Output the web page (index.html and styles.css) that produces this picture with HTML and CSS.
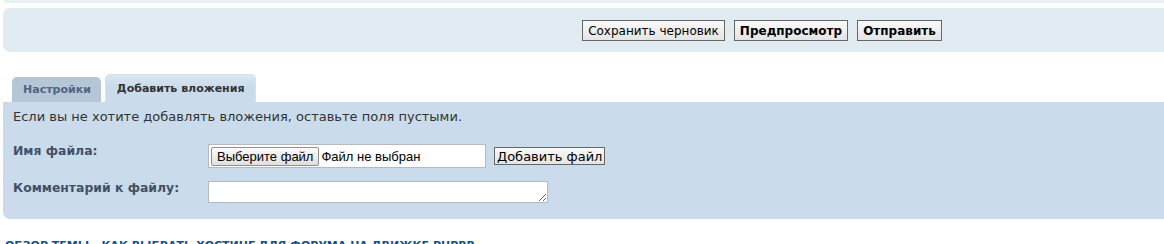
FILE: index.html
```html
<!DOCTYPE html>
<html lang="ru">
<head>
    <meta charset="UTF-8">
    <title>Ответ</title>
    <link rel="stylesheet" href="styles.css">
</head>
<body>
    <div class="wrap">
        <div class="panel-top"></div>

        <div class="panel-submit">
            <fieldset class="submit-buttons">
                <input type="submit" class="button2" value="Сохранить черновик">
                <input type="submit" class="button1" value="Предпросмотр">
                <input type="submit" class="button1" value="Отправить">
            </fieldset>
        </div>

        <ul class="tabs">
            <li><a href="#">Настройки</a></li>
            <li class="active"><a href="#">Добавить вложения</a></li>
        </ul>

        <div class="panel-attach">
            <p>Если вы не хотите добавлять вложения, оставьте поля пустыми.</p>
            <dl>
                <dt><label for="fileupload">Имя файла:</label></dt>
                <dd>
                    <span class="file-box">
                        <span class="file-btn">Выберите файл</span>
                        <span class="file-name">Файл не выбран</span>
                    </span>
                    <input type="submit" class="button-add" value="Добавить файл">
                </dd>
            </dl>
            <dl>
                <dt><label for="filecomment">Комментарий к файлу:</label></dt>
                <dd><textarea id="filecomment" class="inputbox"></textarea></dd>
            </dl>
        </div>

        <h3 class="review">Обзор темы - Как выбрать хостинг для форума на движке phpBB</h3>
    </div>
</body>
</html>
```

FILE: styles.css
```css
body {
    margin: 0;
    overflow: hidden;
    font-family: "DejaVu Sans", Verdana, sans-serif;
    font-size: 12px;
    color: #333;
    background-color: #fff;
}
.wrap {
    width: 1518px;
    padding-left: 3px;
}
.panel-top {
    height: 3px;
    background-color: #e9f0f4;
    border-radius: 0 0 0 6px;
}
.panel-submit {
    margin-top: 5px;
    height: 44px;
    background-color: #e1ebf2;
    border-radius: 7px 0 0 7px;
}
.submit-buttons {
    border: none;
    margin: 0;
    padding: 12px 0 0 0;
    display: flex;
    justify-content: center;
    gap: 9px;
}
.submit-buttons input {
    font-family: "DejaVu Sans", Verdana, sans-serif;
    font-size: 12px;
    height: 21px;
    padding: 0 5px;
    color: #000;
    border: 1px solid #666;
    background: linear-gradient(#fafafa, #e4e4e4);
}
.submit-buttons .button1 {
    font-weight: bold;
}
.tabs {
    list-style: none;
    margin: 22px 0 0 9px;
    padding: 0;
    display: flex;
    align-items: flex-end;
    gap: 4px;
}
.tabs a {
    display: block;
    height: 25px;
    line-height: 25px;
    padding: 0 10px 0 11px;
    font-size: 11px;
    font-weight: bold;
    color: #536482;
    text-decoration: none;
    background-color: #b5c6d7;
    border-radius: 5px 5px 0 0;
}
.tabs .active a {
    height: 27px;
    line-height: 27px;
    padding: 0 11px 0 11px;
    color: #333;
    background: linear-gradient(#dce7f1, #cadceb 40%);
    border: 1px solid #d6e2ee;
    border-bottom: none;
}
.panel-attach {
    background-color: #cadceb;
    border-radius: 0 0 0 7px;
    padding: 6px 10px 16px 10px;
}
.panel-attach p {
    margin: 0 0 18px 0;
    font-size: 13px;
    line-height: 18px;
}
.panel-attach dl {
    display: flex;
    margin: 0 0 13px 0;
}
.panel-attach dl:last-child {
    margin-bottom: 0;
}
.panel-attach dt {
    width: 195px;
}
.panel-attach dd {
    margin: 0;
    display: flex;
    align-items: center;
    gap: 8px;
}
.panel-attach label {
    font-size: 12.4px;
    font-weight: bold;
    color: #425067;
    line-height: 14px;
}
.file-box {
    display: flex;
    align-items: center;
    width: 273px;
    height: 22px;
    padding: 0 1px 0 2px;
    background-color: #fff;
    border: 1px solid #b4bac0;
}
.file-btn {
    font-family: "Liberation Sans", Arial, sans-serif;
    font-size: 13px;
    height: 17px;
    line-height: 17px;
    padding: 0 5px;
    border: 1px solid #8f8f8f;
    border-radius: 2px;
    background: linear-gradient(#fcfcfc, #dfdfdf);
    color: #000;
}
.file-name {
    font-family: "Liberation Sans", Arial, sans-serif;
    font-size: 13px;
    color: #000;
    padding-left: 2px;
}
.button-add {
    font-family: "DejaVu Sans", Verdana, sans-serif;
    font-size: 13px;
    height: 18px;
    padding: 0 2px;
    color: #000;
    border: 1px solid #666;
    background: linear-gradient(#fafafa, #e4e4e4);
}
.inputbox {
    width: 334px;
    height: 16px;
    padding: 2px;
    border: 1px solid #b4bac0;
    background-color: #fff;
    font-family: "DejaVu Sans", Verdana, sans-serif;
}
.review {
    margin: 20px 0 0 2px;
    font-size: 11px;
    font-weight: bold;
    text-transform: uppercase;
    color: #115098;
}
```
